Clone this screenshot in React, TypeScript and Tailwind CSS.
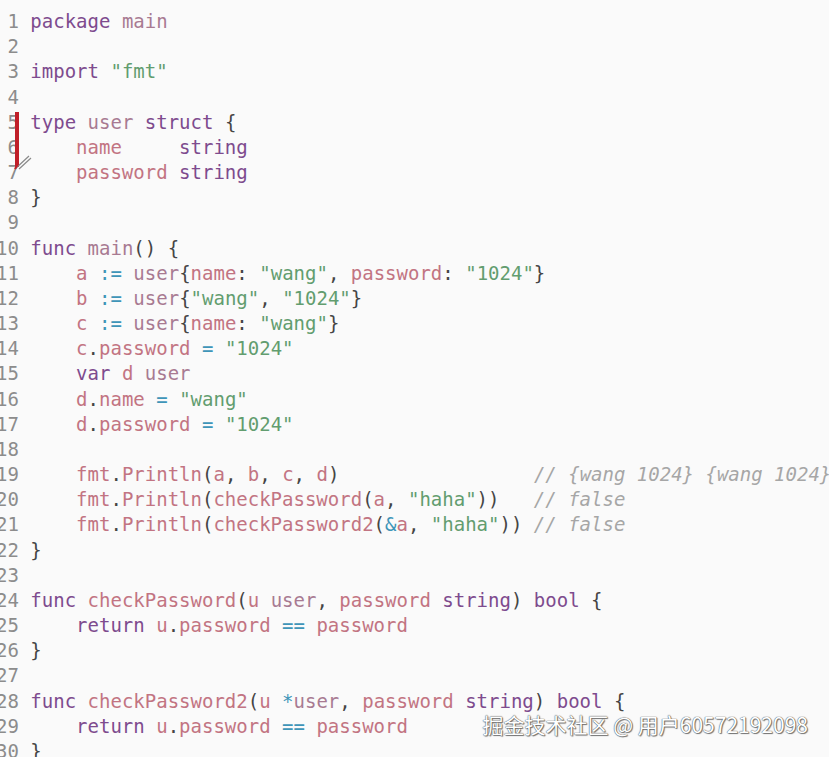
import React from "react";

type Tok = { text: string; cls: string };

const KEYWORDS = new Set(["package", "import", "type", "struct", "func", "return", "var", "string", "bool"]);
const TYPES = new Set(["user", "main"]);

const code = [
  "package main",
  "",
  'import "fmt"',
  "",
  "type user struct {",
  "    name     string",
  "    password string",
  "}",
  "",
  "func main() {",
  '    a := user{name: "wang", password: "1024"}',
  '    b := user{"wang", "1024"}',
  '    c := user{name: "wang"}',
  '    c.password = "1024"',
  "    var d user",
  '    d.name = "wang"',
  '    d.password = "1024"',
  "",
  "    fmt.Println(a, b, c, d)                 // {wang 1024} {wang 1024}",
  '    fmt.Println(checkPassword(a, "haha"))   // false',
  '    fmt.Println(checkPassword2(&a, "haha")) // false',
  "}",
  "",
  "func checkPassword(u user, password string) bool {",
  "    return u.password == password",
  "}",
  "",
  "func checkPassword2(u *user, password string) bool {",
  "    return u.password == password",
  "}",
];

function tokenize(line: string): Tok[] {
  const out: Tok[] = [];
  const re = /(\/\/.*$)|("[^"]*")|([A-Za-z_][A-Za-z0-9_]*)|(:=|==|=|&|\*)|(\s+)|([^\sA-Za-z_"]+?)/g;
  let m: RegExpExecArray | null;
  while ((m = re.exec(line))) {
    if (m[1]) out.push({ text: m[1], cls: "text-[#a6a6a6] italic" });
    else if (m[2]) out.push({ text: m[2], cls: "text-[#629d6f]" });
    else if (m[3]) {
      const w = m[3];
      if (KEYWORDS.has(w)) out.push({ text: w, cls: "text-[#7e4b8e]" });
      else if (TYPES.has(w)) out.push({ text: w, cls: "text-[#a87a92]" });
      else out.push({ text: w, cls: "text-[#c27482]" });
    } else if (m[4]) out.push({ text: m[4], cls: "text-[#3e95b8]" });
    else if (m[5]) out.push({ text: m[5], cls: "" });
    else if (m[6]) out.push({ text: m[6], cls: "text-[#454545]" });
  }
  return out;
}

export default function App() {
  return (
    <div className="relative w-[829px] h-[757px] overflow-hidden bg-[#fafafa]">
      <div className="-ml-[4px] pt-[9px] font-['DejaVu_Sans_Mono',monospace] text-[19px] leading-[25.17px] whitespace-pre">
        {code.map((line, i) => (
          <div key={i} className="flex">
            <span className="text-[#8c8c8c]">{String(i + 1).padStart(2, " ")} </span>
            <span>
              {tokenize(line).map((t, j) => (
                <span key={j} className={t.cls}>
                  {t.text}
                </span>
              ))}
            </span>
          </div>
        ))}
      </div>

      {/* red marker from the video */}
      <div className="absolute left-[15px] top-[112px] w-[4px] h-[55px] bg-[#c01f29]" />
      <svg className="absolute left-[12px] top-[150px]" width="22" height="22" viewBox="0 0 22 22">
        <path d="M3 19 L17 6 M7 19 L19 8" stroke="#8a8a8a" strokeWidth="1.2" fill="none" />
        <path d="M3 19 L6 14" stroke="#c01f29" strokeWidth="2" fill="none" />
      </svg>

      <div className="absolute right-[21px] top-[709px] font-['Noto_Sans_CJK_SC',sans-serif] text-[21px] leading-[30px] text-white [text-shadow:0_0_1px_#555,0_0_1px_#555,1px_1px_1px_#777]">
        掘金技术社区 @ 用户60572192098
      </div>
    </div>
  );
}
